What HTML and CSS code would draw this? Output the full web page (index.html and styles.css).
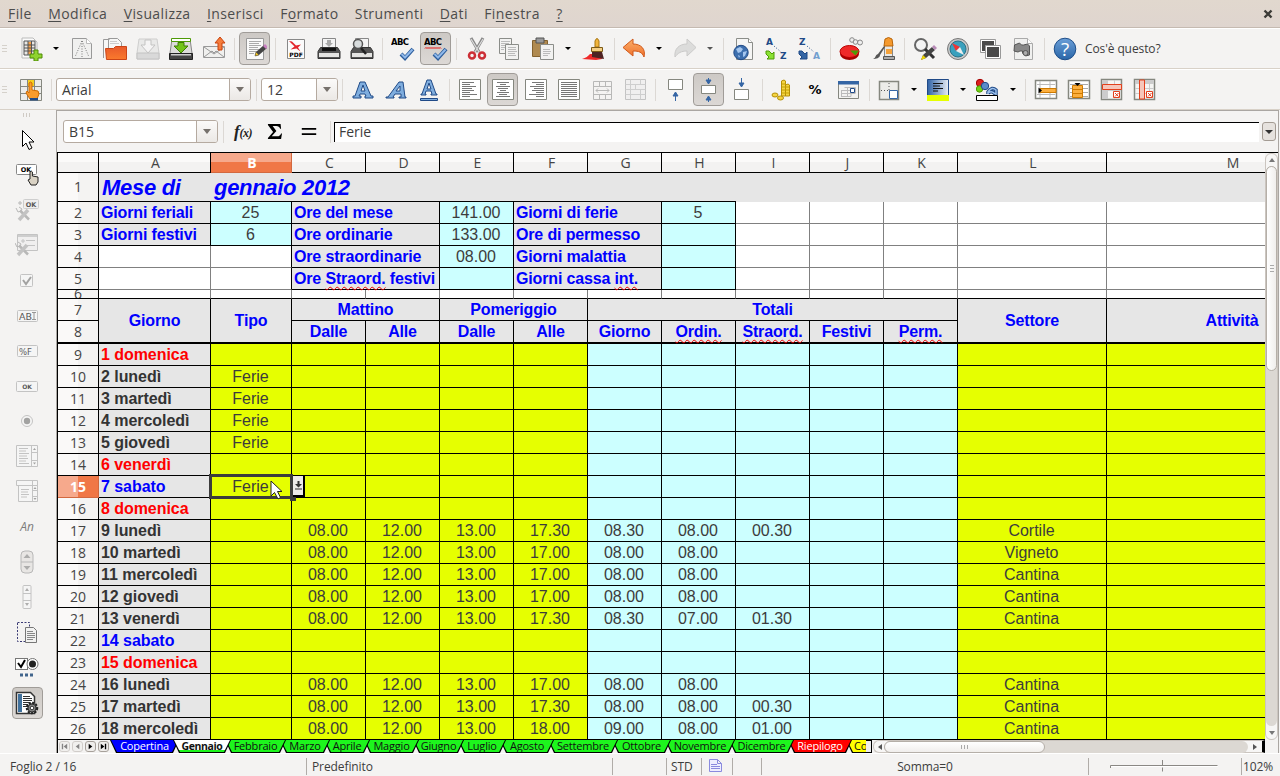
FILE: index.html
```html
<!DOCTYPE html>
<html lang="it">
<head>
    <meta charset="UTF-8">
    <meta name="viewport" content="width=device-width, initial-scale=1.0">
    <title>Foglio presenze</title>
    <link rel="stylesheet" href="styles.css">
</head>
<body>
    <nav class="menubar">
        <span><u>F</u>ile</span>
        <span><u>M</u>odifica</span>
        <span><u>V</u>isualizza</span>
        <span><u>I</u>nserisci</span>
        <span>F<u>o</u>rmato</span>
        <span>Strumenti</span>
        <span><u>D</u>ati</span>
        <span>Fi<u>n</u>estra</span>
        <span><u>?</u></span>
        <svg class="close" width="10" height="10" viewBox="0 0 10 10"><path d="M1.5 1.5l7 7M8.5 1.5l-7 7" stroke="#3c3b37" stroke-width="2.4"/></svg>
    </nav>

    <!-- standard toolbar -->
    <div class="toolbar standard">
        <i class="grip"></i>
        <div class="btn"><svg viewBox="0 0 24 24"><path d="M3 1h11l4 4v16H3z" fill="#fafafa" stroke="#bbb"/><path d="M5 4h11v14H5z" fill="#e8e8e6" stroke="#555"/><path d="M9 5h3v12H9z" fill="#f5a14b"/><path d="M5 8h11M5 11h11M5 14h11M9 4v14M12.500 4v14" stroke="#555" fill="none"/><path d="M15 13h4v4h4v4h-4v3h-4v-3h-4v-4h4z" fill="#8fd32e" stroke="#4e8a06"/></svg></div>
        <i class="arrow"></i>
        <div class="btn"><svg viewBox="0 0 24 24"><path d="M2.500 1.500h14l5 5v15h-19z" fill="#f0f0ef" stroke="#999"/><path d="M16.500 1.500v5h5" fill="#fff" stroke="#bbb"/><path d="M12 4L5 20M12 4l7 16M12 4v17" stroke="#777" stroke-dasharray="1 1.500" fill="none"/></svg></div>
        <div class="btn"><svg viewBox="0 0 24 24"><path d="M.500 21V2.500h6M5.500 1.500h9l4 4V15h-13z" fill="#f7f7f6" stroke="#999"/><path d="M7 4.500h7M7 6.500h9" stroke="#ccc"/><path d="M2.500 11.500h8l2-2h11v13h-20z" fill="url(#gOrange)" stroke="#cc4416"/></svg></div>
        <div class="btn dim"><svg viewBox="0 0 24 24"><path d="M3 2h18l2 14v6H1v-6z" fill="#e4e4e3" stroke="#bbb"/><path d="M1 16h22v6H1z" fill="#ccc" stroke="#aaa"/><path d="M9 3h6v5h4l-7 8-7-8h4z" fill="#f6f6f6" stroke="#aaa"/></svg></div>
        <div class="btn"><svg viewBox="0 0 24 24"><path d="M3 2h18l2 14v6H1v-6z" fill="#dcdcda" stroke="#888"/><path d="M.500 16.500h23v6H.500z" fill="#444" stroke="#222"/><path d="M2 17h20v1.500H2z" fill="#ccc"/><path d="M2.500 1.500h19v3h-19z" fill="#fff" stroke="#4e9a06"/><path d="M9 5.500h6V9h4l-7 7-7-7h4z" fill="#73c41a" stroke="#3f7d04"/></svg></div>
        <div class="btn"><svg viewBox="0 0 24 24"><path d="M1.500 9.500h21v11h-21z" fill="#f0f0ee" stroke="#999"/><path d="M2 20l8-6 2 2 2-2 8 6M2 10l10 7 10-7" stroke="#999" fill="none"/><path d="M18 0l5 6h-3v7h-4V6h-3z" fill="#f57c3c" stroke="#c9430d"/></svg></div>
        <i class="sep"></i>
        <div class="btn on"><svg viewBox="0 0 24 24"><path d="M3.500 1.500h17v21h-17z" fill="#fafafa" stroke="#999"/><path d="M6 4.500h12M6 6.500h10M6 8.500h12M6 10.500h9M6 12.500h11M6 14.500h8M6 16.500h5" stroke="#aaa"/><path d="M12 19l1-4 8-7 3 3-8 7z" fill="#444"/><path d="M20 9l2-2 3 3-2 2z" fill="#c77fc0"/><path d="M12 19l1-4 3 3z" fill="#f3c623" stroke="#444" stroke-width=".5"/></svg></div>
        <i class="sep"></i>
        <div class="btn"><svg viewBox="0 0 24 24"><path d="M3.500 2.500h17v19h-17z" fill="#fbfbfb" stroke="#888"/><path d="M5 4l3 .5 4 4 5-1-3 3 2.500 4-4-3-6 1 4-3z" fill="#e3242b"/><text x="12" y="20" font-size="6" font-weight="bold" text-anchor="middle" class="ico-text">PDF</text></svg></div>
        <div class="btn"><svg viewBox="0 0 24 24"><path d="M5.500 1.500h13v10h-13z" fill="#f4f4f4" stroke="#888"/><path d="M10 3h4v3h2l-4 4-4-4h2z" fill="#aaa"/><path d="M3.500 10.500h17l2.500 4v7H1v-7z" fill="#555" stroke="#333"/><path d="M2 16h20v4H2z" fill="#e4e4e2"/><path d="M5 11h14v3H5z" fill="#111"/></svg></div>
        <div class="btn"><svg viewBox="0 0 24 24"><path d="M5.500 1.500h13v10h-13z" fill="#f4f4f4" stroke="#888"/><path d="M3.500 10.500h17l2.500 4v7H1v-7z" fill="#555" stroke="#333"/><path d="M2 16h20v4H2z" fill="#e4e4e2"/><circle cx="8" cy="7" r="4.500" fill="#d8dcdd" stroke="#555" stroke-width="1.500"/><path d="M11 11l5 6" stroke="#222" stroke-width="2.500"/></svg></div>
        <i class="sep"></i>
        <div class="btn"><svg viewBox="0 0 24 24"><text x="9" y="8" font-size="8.500" font-weight="bold" text-anchor="middle" class="ico-text" textLength="18">ABC</text><path d="M10 17l4 4 8-9" fill="none" stroke="#2c5d9b" stroke-width="4"/><path d="M10.500 17l3.500 3.500 7.500-8" fill="none" stroke="#8fb8ea" stroke-width="2"/></svg></div>
        <div class="btn on"><svg viewBox="0 0 24 24"><text x="9" y="8" font-size="8.500" font-weight="bold" text-anchor="middle" class="ico-text" textLength="18">ABC</text><path d="M1 11.500l1-1 1 1 1-1 1 1 1-1 1 1 1-1 1 1 1-1 1 1 1-1 1 1 1-1 1 1 1-1 1 1" fill="none" stroke="#e00"/><path d="M10 17l4 4 8-9" fill="none" stroke="#2c5d9b" stroke-width="4"/><path d="M10.500 17l3.500 3.500 7.500-8" fill="none" stroke="#8fb8ea" stroke-width="2"/></svg></div>
        <i class="sep"></i>
        <div class="btn"><svg viewBox="0 0 24 24"><path d="M6 1l8 14M18 1l-8 14" stroke="#888" stroke-width="3"/><path d="M6 2l8 13M18 2l-8 13" stroke="#ddd" stroke-width="1.200"/><circle cx="7" cy="18.500" r="3" fill="none" stroke="#cc2f36" stroke-width="2.500"/><circle cx="17" cy="18.500" r="3" fill="none" stroke="#cc2f36" stroke-width="2.500"/></svg></div>
        <div class="btn"><svg viewBox="0 0 24 24"><path d="M1.500 1.500h12v15h-12z" fill="#f2f2f1" stroke="#8b8d89"/><path d="M3 4.500h9M3 6.500h8M3 8.500h4M3 10.500h4M3 12.500h3" stroke="#bbb"/><path d="M7.500 7.500h13v15h-13z" fill="#f2f2f1" stroke="#8b8d89"/><path d="M10 10.500h8M10 12.500h8M10 14.500h9M10 16.500h7M10 18.500h8" stroke="#bbb"/></svg></div>
        <div class="btn"><svg viewBox="0 0 24 24"><path d="M1.500 3.500h15v16h-15z" fill="#b08a50" stroke="#84622f"/><path d="M5 1h8v5H5z" fill="#999" stroke="#555"/><path d="M9.500 7.500h13v15h-13z" fill="#f2f2f1" stroke="#8b8d89"/><path d="M12 12.500h7M12 14.500h8M12 16.500h7M12 18.500h5" stroke="#bbb"/></svg></div>
        <i class="arrow"></i>
        <div class="btn"><svg viewBox="0 0 24 24"><path d="M0 22c4-1 6-3 8-5l11 0 1 5-6 1z" fill="#ef2929"/><path d="M13 10V4q2-5 4 0v6z" fill="#f0b43c" stroke="#a9740d"/><path d="M9.500 10.500h11v4h-11z" fill="#f4cf84" stroke="#7c5a17"/><path d="M10 15h10l2 7-12-2z" fill="#4e2323"/></svg></div>
        <i class="sep"></i>
        <div class="btn split"><svg viewBox="0 0 24 24"><path d="M1 10.500L11 2v5c8 0 13 5 11 13-2-5-5-6-11-6v5z" fill="url(#gUndo)" stroke="#d0591a"/></svg></div>
        <i class="arrow"></i>
        <div class="btn dim"><svg viewBox="0 0 24 24"><path d="M23 10.500L14 2v5C6 7 1 12 2 20c3-4 6-6 12-6v5z" fill="#d0d0cf" stroke="#b5b5b4"/></svg></div>
        <i class="arrow dim"></i>
        <i class="sep"></i>
        <div class="btn"><svg viewBox="0 0 24 24"><path d="M4.500 1.500h12l4 4v17h-16z" fill="#f5f5f4" stroke="#8b8d89"/><path d="M16.500 1.500v4h4" fill="#fff" stroke="#8b8d89"/><circle cx="9" cy="15.500" r="7.200" fill="#3d6fae" stroke="#204a87"/><path d="M4 12l4-2 3 2-2 3-3 1zM11 15l4-1-2 5-2 1zM6 18l2 1-1 2z" fill="#a5c6ee"/></svg></div>
        <div class="btn"><svg viewBox="0 0 24 24"><text x="1" y="8" font-size="9" font-weight="bold" class="ico-text blue">A</text><text x="15" y="22" font-size="9" font-weight="bold" class="ico-text blue">Z</text><path d="M9 9l7 6" stroke="#204a87" stroke-dasharray="1 2"/><path d="M1 14h3l3 3 2-2v7H2l2-2-3-3z" fill="#8ae234" stroke="#4e9a06"/></svg></div>
        <div class="btn"><svg viewBox="0 0 24 24"><text x="1" y="8" font-size="9" font-weight="bold" class="ico-text blue">Z</text><text x="15" y="22" font-size="9" font-weight="bold" class="ico-text lightblue">A</text><path d="M9 9l7 6" stroke="#204a87" stroke-dasharray="1 2"/><path d="M1 14h3l3 3 2-2v7H2l2-2-3-3z" fill="#3465a4" stroke="#204a87"/></svg></div>
        <i class="sep"></i>
        <div class="btn"><svg viewBox="0 0 24 24"><ellipse cx="10.500" cy="17" rx="9.500" ry="6" fill="#a40000"/><ellipse cx="10.500" cy="14.500" rx="9.500" ry="6" fill="#ef2929" stroke="#b00"/><path d="M11 13.500h9l-3.500 5z" fill="#4e9a06"/><g fill="#eee" stroke="#888"><circle cx="13" cy="3" r="2.300"/><circle cx="21" cy="5.500" r="2.500"/><circle cx="16.500" cy="5" r="2.300"/></g></svg></div>
        <div class="btn"><svg viewBox="0 0 24 24"><path d="M12.500 8h8v12h-8z" fill="#e8e8e6" stroke="#888"/><path d="M13 2q3.500-3 7 0l1 7h-9z" fill="#f59a2e" stroke="#b8650a"/><path d="M14 12h6v5h-6z" fill="#f5a33c"/><path d="M11.500 19.500h11v3h-11z" fill="#aaa" stroke="#555"/><path d="M1 22c3-1 2-4 5-5l6-8 1 1-5 8c0 3-4 4-7 4z" fill="#555"/></svg></div>
        <i class="sep"></i>
        <div class="btn"><svg viewBox="0 0 24 24"><circle cx="8" cy="8" r="6" fill="#f4f4f4" stroke="#666" stroke-width="2"/><path d="M12 12l9 9" stroke="#333" stroke-width="3"/><path d="M8 23l2-5 9-8 3 3-9 8z" fill="#444"/><path d="M19 10l2-2 3 3-2 2z" fill="#b98bb8"/><path d="M8 23l2-5 3 3z" fill="#edd400"/></svg></div>
        <div class="btn"><svg viewBox="0 0 24 24"><circle cx="12" cy="12" r="10.500" fill="#c9c9c9" stroke="#777"/><circle cx="12" cy="12" r="8" fill="#3aa0bd" stroke="#2b7288"/><path d="M6 6l8 4-4 4z" fill="#e33"/><path d="M18 18l-8-4 4-4z" fill="#eee"/></svg></div>
        <div class="btn"><svg viewBox="0 0 24 24"><path d="M1.500 2.500h15v13h-15z" fill="#fff" stroke="#999"/><path d="M3 4h12v10H3z" fill="#4a4a4a"/><path d="M6.500 8.500h15v13h-15z" fill="#fff" stroke="#999"/><path d="M8 10h12v10H8z" fill="#4a4a4a"/></svg></div>
        <div class="btn"><svg viewBox="0 0 24 24"><path d="M2.500 1.500h13l5 5v16h-18z" fill="#f0f0ef" stroke="#aaa"/><path d="M15.500 1.500v5h5" fill="#fff" stroke="#aaa"/><path d="M2.500 8l5-2 2 2h2l4-1 2 2v9l-4 1-3-3v-2H8l-2 1-4-1z" fill="#888" stroke="#555"/><circle cx="13.500" cy="16" r="2.500" fill="#aaa" stroke="#555"/></svg></div>
        <i class="sep"></i>
        <div class="btn"><svg viewBox="0 0 24 24"><circle cx="12" cy="12" r="10.800" fill="url(#gHelp)" stroke="#1f4f8a"/><text x="12" y="18.500" font-size="19" text-anchor="middle" fill="#fff" font-family="Open Sans, sans-serif">?</text></svg></div>
        <span class="whats">Cos'è questo?</span>
    </div>

    <!-- formatting toolbar -->
    <div class="toolbar">
        <i class="grip"></i>
        <div class="btn"><svg viewBox="0 0 24 24"><path d="M1.500 1.500h21v21h-21z" fill="#ecece9" stroke="#85877f"/><path d="M1 8.500h22M1 15.500h22M8.500 1v22M15.500 1v22" stroke="#85877f"/><path d="M9 2h6v6H9z" fill="#f5d020"/><path d="M10 5q1.500-2 3 0v7l6 1 1 3-2 5h-7l-4-6 1-2 2 2z" fill="#f99b2d" stroke="#ce6a00"/><path d="M11 20h8v2.500h-8z" fill="#204a87"/></svg></div>
        <i class="sep"></i>
        <div class="combo font"><span>Arial</span><b></b></div>
        <i class="sep"></i>
        <div class="combo size"><span>12</span><b></b></div>
        <i class="sep narrow"></i>
        <div class="btn"><svg viewBox="0 0 24 24"><path fill-rule="evenodd" d="M2 20v-2h2L9 4h5l6 14h2v2h-8v-2h1l-1-2H9l-1 2h2v2zM10 13h4l-2-6z" fill="#7fadde" stroke="#204a87"/></svg></div>
        <div class="btn"><svg viewBox="0 0 24 24"><path fill-rule="evenodd" d="M2 20v-1h2L15 4h4l2 15h1v1h-7v-1h2v-3h-6l-2 3h1v1zM12 13h4l0-5z" fill="#7fadde" stroke="#204a87"/></svg></div>
        <div class="btn"><svg viewBox="0 0 24 24"><path fill-rule="evenodd" d="M4 17v-1h1l5-14h4l5 14h1v1h-6v-1h1l-1-3H9l-1 3h1v1zM10 11h4l-2-6z" fill="#7fadde" stroke="#204a87"/><path d="M3.500 20.500h17v2h-17z" fill="#7fadde" stroke="#204a87"/></svg></div>
        <i class="sep"></i>
        <div class="btn"><svg viewBox="0 0 24 24"><path d="M1.500 1.500h21v20h-21z" fill="#fff" stroke="#85877f"/><path d="M4 4.500h12M4 6.500h8M4 8.500h14M4 10.500h10M4 12.500h12M4 14.500h8M4 16.500h15M4 18.500h8" stroke="#777"/></svg></div>
        <div class="btn on"><svg viewBox="0 0 24 24"><path d="M1.500 1.500h21v20h-21z" fill="#fff" stroke="#85877f"/><path d="M6 4.500h12M9 6.500h6M5 8.500h14M7 10.500h10M9 12.500h6M6 14.500h12M8 16.500h8M5 18.500h14" stroke="#777"/></svg></div>
        <div class="btn"><svg viewBox="0 0 24 24"><path d="M1.500 1.500h21v20h-21z" fill="#fff" stroke="#85877f"/><path d="M8 4.500h12M12 6.500h8M6 8.500h14M10 10.500h10M8 12.500h12M12 14.500h8M5 16.500h15M12 18.500h8" stroke="#777"/></svg></div>
        <div class="btn"><svg viewBox="0 0 24 24"><path d="M1.500 1.500h21v20h-21z" fill="#fff" stroke="#85877f"/><path d="M4 4.500h16M4 6.500h16M4 8.500h16M4 10.500h16M4 12.500h16M4 14.500h16M4 16.500h16M4 18.500h16" stroke="#777"/></svg></div>
        <div class="btn dim"><svg viewBox="0 0 24 24"><path d="M3.500 3.500h18v18h-18zM3.500 8.500h18M3.500 16.500h18M9.500 3.500v5M15.500 3.500v5M9.500 16.500v5M15.500 16.500v5M6 12.500h13M8 10.500l-2 2 2 2M17 10.500l2 2-2 2" fill="none" stroke="#999"/></svg></div>
        <div class="btn dim"><svg viewBox="0 0 24 24"><path d="M2.500 1.500h20v20h-20z" fill="#eee" stroke="#aaa"/><path d="M2.500 6.500h20M2.500 11.500h20M2.500 16.500h20M7.500 1.500v20M12.500 6.500v5M17.500 1.500v5M17.500 11.500v10" stroke="#bbb" fill="none"/></svg></div>
        <i class="sep"></i>
        <div class="btn"><svg viewBox="0 0 24 24"><path d="M4.500 1.500h14v10h-14z" fill="#fff" stroke="#85877f"/><path d="M11.500 23v-5M9 18l2.500-4 2.500 4z" stroke="#3465a4" fill="#3465a4"/></svg></div>
        <div class="btn on"><svg viewBox="0 0 24 24"><path d="M4.500 7.500h14v8h-14z" fill="#fff" stroke="#85877f"/><path d="M9 2l2.500 4L14 2zM9 22l2.500-4 2.500 4zM11.500 0v3M11.500 21v3" stroke="#3465a4" fill="#3465a4"/></svg></div>
        <div class="btn"><svg viewBox="0 0 24 24"><path d="M4.500 11.500h14v10h-14z" fill="#fff" stroke="#85877f"/><path d="M11.500 0v5M9 5l2.500 4L14 5z" stroke="#3465a4" fill="#3465a4"/></svg></div>
        <i class="sep"></i>
        <div class="btn"><svg viewBox="0 0 24 24"><path d="M10.500 3q3-2 4 0v15h-4zM14.500 7q3-2 4 0v11h-4z" fill="#f4d442" stroke="#b58f06"/><path d="M11 6h4M11 9h7M11 12h7M11 15h7" stroke="#c4a000"/><ellipse cx="4" cy="17" rx="3" ry="2" fill="#f4d442" stroke="#b58f06"/><ellipse cx="9.500" cy="20" rx="3" ry="2" fill="#f4d442" stroke="#b58f06"/></svg></div>
        <div class="btn"><svg viewBox="0 0 24 24"><text x="11" y="16" font-size="13" font-weight="bold" text-anchor="middle" class="ico-text">%</text></svg></div>
        <div class="btn"><svg viewBox="0 0 24 24"><path d="M1.500 3.500h20v17h-20z" fill="#f3f3f1" stroke="#85877f"/><path d="M1 3h21v3.500H1z" fill="#3465a4"/><path d="M7.500 9.500h11v6M4 12.500h14M4 15.500h14M4 18.500h10M4.500 12v6M10.500 9.500v9M14 9.500v9" fill="none" stroke="#bbb"/><path d="M13.500 10.500h4v4h-4z" fill="#fff" stroke="#204a87"/></svg></div>
        <i class="sep"></i>
        <div class="btn split"><svg viewBox="0 0 24 24"><path d="M2.500 3.500h19v18h-19z" fill="#ecece9" stroke="#85877f" stroke-width="1.500"/><path d="M12 5v8M4 12.500h9" stroke="#555" stroke-dasharray="1 2"/><path d="M12.500 12.500h8v8h-8z" fill="#fff" stroke="#3465a4"/></svg></div>
        <i class="arrow"></i>
        <div class="btn split"><svg viewBox="0 0 24 24"><path d="M.500 1.500h21v16h-21z" fill="url(#gBack)" stroke="#204a87"/><path d="M6 5.500h10M6 8h7M6 10.500h10M6 13h5" stroke="#111"/><path d="M0 17h22v6H0z" fill="#e6ff00"/></svg></div>
        <i class="arrow"></i>
        <div class="btn split"><svg viewBox="0 0 24 24"><circle cx="4" cy="5" r="3.700" fill="#dc1f1f" stroke="#a40000"/><circle cx="3.500" cy="11" r="3.200" fill="#73d216" stroke="#4e9a06"/><circle cx="9" cy="8" r="3.700" fill="#5a8bc9" stroke="#204a87"/><path d="M12 16v-2q4-6 8-2v5M12 15q4-3 7 1" fill="none" stroke="#204a87" stroke-width="3.500"/><path d="M12 16v-2q4-6 8-2v5M12 15q4-3 7 1" fill="none" stroke="#9cc1ec" stroke-width="1.500"/><path d="M.500 17.500h21v5h-21z" fill="#fff" stroke="#000"/></svg></div>
        <i class="arrow"></i>
        <i class="sep"></i>
        <div class="btn"><svg viewBox="0 0 24 24"><path d="M1.500 2.500h21v18h-21z" fill="#fff" stroke="#85877f" stroke-width="1.500"/><path d="M3 6.500h18M3 16.500h18M6 3v17M16 3v17" stroke="#bbb"/><path d="M6 10.500h16v4H6z" fill="#fcaf3e" stroke="#ce7a00"/><path d="M4.500 9.500l3.500 3-3.500 3z"/></svg></div>
        <div class="btn"><svg viewBox="0 0 24 24"><path d="M1.500 2.500h21v18h-21z" fill="#fff" stroke="#85877f" stroke-width="1.500"/><path d="M3 6.500h18M3 10.500h18M3 14.500h18M3 18.500h18" stroke="#aaa"/><path d="M5.500 7.500h10v12h-10zM5.500 11.500h10M5.500 15.500h10" fill="#fcaf3e" stroke="#ce7a00"/><path d="M7.500 5h6l-3 3z"/></svg></div>
        <div class="btn"><svg viewBox="0 0 24 24"><path d="M1.500 1.500h20v20h-20z" fill="#f5f5f3" stroke="#85877f" stroke-width="1.500"/><path d="M2 2h5v19H2z" fill="#ccc"/><path d="M7.500 2v19M14.500 2v19M2 12.500h19" stroke="#ccc"/><path d="M2.500 6.500h19v5h-19z" fill="#f6c6ba" stroke="#e3401c"/><path d="M13.500 13.500h6v6h-6z" fill="#fff" stroke="#e3401c"/><path d="M15 15l3.500 3.500M18.500 15L15 18.500" stroke="#e3401c"/></svg></div>
        <div class="btn"><svg viewBox="0 0 24 24"><path d="M1.500 1.500h20v20h-20z" fill="#f5f5f3" stroke="#85877f" stroke-width="1.500"/><path d="M2 2h19v4H2z" fill="#ccc"/><path d="M2 10.500h19M2 15.500h19M16.500 2v19" stroke="#ccc"/><path d="M6.500 2v19h5V2z" fill="#f6c6ba" stroke="#e3401c"/><path d="M13.500 13.500h6v6h-6z" fill="#fff" stroke="#e3401c"/><path d="M15 15l3.500 3.500M18.500 15L15 18.500" stroke="#e3401c"/></svg></div>
    </div>

    <div class="main">
        <!-- form controls toolbar -->
        <aside class="sidebar">
            <i class="grip-h"></i>
            <div class="tool"><svg viewBox="0 0 24 24"><path d="M7.500 2.500v16l3.500-3.500 3 6.500 3-1.500-3-6h5z" fill="#fff" stroke="#000"/></svg></div>
            <div class="tool"><svg viewBox="0 0 24 24"><rect x="1.500" y="1.500" width="20" height="10" rx="1" fill="#fff" stroke="#888"/><text x="11" y="9" font-size="6.500" font-weight="bold" text-anchor="middle" class="ico-text">OK</text><path d="M15 9q1.200-2 2.400 0v4l5.600 1v5l-2 3h-5l-3-5 2-1z" fill="#d9d2c4" stroke="#222"/></svg></div>
            <div class="tool dim"><svg viewBox="0 0 24 24"><rect x="8.500" y="1.500" width="15" height="9" rx="1" fill="#eee" stroke="#bbb"/><text x="16" y="8.500" font-size="6.500" font-weight="bold" text-anchor="middle" class="ico-text">OK</text><path d="M5 12.500l9 9" stroke="#999" stroke-width="2.500"/><path d="M13 12L4 22" stroke="#aaa" stroke-width="3.500"/><path d="M1 10l2 4 3-1 1-2-3-2M3 5h4M5 3v4" stroke="#999" fill="none"/></svg></div>
            <div class="tool dim"><svg viewBox="0 0 24 24"><path d="M2.500 1.500h20v16h-20z" fill="#eee" stroke="#aaa"/><path d="M3 2h19v2H3z" fill="#bbb"/><path d="M7 7h2v2H7zM11 7.500h9M11 12.500h9" stroke="#aaa" fill="none"/><path d="M4 12.500l9 9" stroke="#999" stroke-width="2.500"/><path d="M12 12L3 22" stroke="#aaa" stroke-width="3.500"/><path d="M0 10l2 4 3-1 1-2-3-2" stroke="#999" fill="none"/></svg></div>
            <div class="tool dim"><svg viewBox="0 0 24 24"><rect x="5.500" y="6.500" width="12" height="12" rx="1" fill="#f7f7f7" stroke="#aaa"/><path d="M8 12l3 4 5-7" fill="none" stroke="#777" stroke-width="2"/></svg></div>
            <div class="tool dim"><svg viewBox="0 0 24 24"><rect x="2.500" y="6.500" width="20" height="11" rx="1" fill="#f7f7f7" stroke="#aaa"/><text x="10.500" y="15.500" font-size="9.500" text-anchor="middle" class="ico-text">AB</text><path d="M17 8.500h4M17 15.500h4M19 8.500v7" stroke="#666"/></svg></div>
            <div class="tool dim"><svg viewBox="0 0 24 24"><rect x="2.500" y="6.500" width="20" height="11" rx="1" fill="#f7f7f7" stroke="#aaa"/><text x="10.500" y="15.500" font-size="8.500" text-anchor="middle" class="ico-text">%F</text></svg></div>
            <div class="tool dim"><svg viewBox="0 0 24 24"><rect x="1.500" y="7.500" width="21" height="10" rx="1" fill="#f7f7f7" stroke="#aaa"/><text x="12" y="15" font-size="6" font-weight="bold" text-anchor="middle" class="ico-text">OK</text></svg></div>
            <div class="tool dim"><svg viewBox="0 0 24 24"><circle cx="12" cy="12" r="5.500" fill="#f7f7f7" stroke="#aaa"/><circle cx="12" cy="12" r="3.200" fill="#777"/></svg></div>
            <div class="tool dim"><svg viewBox="0 0 24 24"><path d="M1.500 1.500h21v21h-21z" fill="#f7f7f7" stroke="#aaa"/><path d="M4 4.500h9M4 7h7M4 9.500h10M4 12h8M4 14.500h9M4 17h7M4 19.500h10M16.500 1.500v21M17 8.500h5M17 16.500h5" stroke="#aaa"/><path d="M18 6l1.500-2 1.500 2zM18 18.500l1.500 2 1.500-2z" fill="#777"/></svg></div>
            <div class="tool dim"><svg viewBox="0 0 24 24"><path d="M1.500 1.500h21v5h-21zM3.500 6.500h19v16h-19z" fill="#f7f7f7" stroke="#aaa"/><path d="M6 10.500h8M6 13h7M6 15.500h8M6 18h6M17.500 1.500v21M18 11.500h4M18 17.500h4" stroke="#aaa"/><path d="M18.500 10l1.500-2 1.500 2zM18.500 19l1.500 2 1.500-2z" fill="#777"/></svg></div>
            <div class="tool dim an">An</div>
            <div class="tool dim"><svg viewBox="0 0 24 24"><rect x="6" y="1" width="12" height="22" rx="4" fill="#e2e0de" stroke="#999"/><path d="M6 12h12" stroke="#999"/><path d="M8.500 8l3.500-4 3.500 4zM8.500 16l3.500 4 3.500-4z" fill="#888"/></svg></div>
            <div class="tool dim"><svg viewBox="0 0 24 24"><rect x="8" y="0.500" width="8" height="23" rx="1" fill="#f7f7f7" stroke="#aaa"/><path d="M8 8.500h8M8 15.500h8" stroke="#aaa"/><path d="M10 6l2-3 2 3zM10 18l2 3 2-3z" fill="#888"/></svg></div>
            <div class="tool"><svg viewBox="0 0 24 24"><path d="M2.500 2.500h12v19h-12z" fill="none" stroke="#3a3a75" stroke-dasharray="2 1.500"/><path d="M10.500 7.500h8l3 3v12h-11z" fill="#f2f2f1" stroke="#777"/><path d="M12 11.500h6M12 13.500h8M12 15.500h8M12 17.500h8M12 19.500h6" stroke="#888"/></svg></div>
            <div class="tool"><svg viewBox="0 0 24 24"><rect x=".500" y="3.500" width="12" height="11" fill="#fff" stroke="#777"/><path d="M3 8l3 4 4-7" fill="none" stroke="#000" stroke-width="2"/><circle cx="17.500" cy="9" r="5.500" fill="#fff" stroke="#777"/><circle cx="17.500" cy="9" r="3.500" fill="#222"/><path d="M5 18.500h3v3H5zM10 18.500h3v3h-3zM15 18.500h3v3h-3z" fill="#41658c"/></svg></div>
            <div class="tool on"><svg viewBox="0 0 24 24"><path d="M1.500 1.500h14l4 4v17h-18z" fill="#fff" stroke="#333" stroke-width="1.500"/><path d="M3 3h4v18H3z" fill="#41719c"/><path d="M8 5.500h7M8 7.500h9M8 9.500h9M8 11.500h7M8 13.500h5M8 15.500h4" stroke="#333"/><circle cx="17" cy="17" r="5" fill="#888" stroke="#222" stroke-width="2.500" stroke-dasharray="2 1.300"/><circle cx="17" cy="17" r="4" fill="#888" stroke="#333"/><circle cx="17" cy="17" r="1.800" fill="#fff" stroke="#333"/></svg></div>
        </aside>

        <section class="work">
            <div class="formula-bar">
                <div class="combo name"><span>B15</span><b></b></div>
                <i class="sep"></i>
                <span class="fx">f<small>(x)</small></span>
                <svg class="sigma" viewBox="0 0 16 18"><path d="M1 1h13.500l.5 5h-1q-1-3-4-3H6l4 5.500L5 14h6q3 0 4-3h1l-1 6H1v-1l5.500-6.500L1 2z"/></svg>
                <svg class="equals" viewBox="0 0 16 10"><path d="M0 1h16v2H0zM0 7h16v2H0z"/></svg>
                <i class="sep"></i>
                <div class="input-line">Ferie</div>
                <div class="expand"><i></i></div>
            </div>

            <div class="sheet-area">
                <div class="sheet-clip">
                    <div class="sheet" id="sheet">
                        <div class="col-head corner"></div>
                        <div class="col-head">A</div>
                        <div class="col-head active">B</div>
                        <div class="col-head">C</div>
                        <div class="col-head">D</div>
                        <div class="col-head">E</div>
                        <div class="col-head">F</div>
                        <div class="col-head">G</div>
                        <div class="col-head">H</div>
                        <div class="col-head">I</div>
                        <div class="col-head">J</div>
                        <div class="col-head">K</div>
                        <div class="col-head">L</div>
                        <div class="col-head">M</div>

                        <div class="row-head">1</div>
                        <div class="title">Mese di</div>
                        <div class="title month">gennaio 2012</div>

                        <div class="row-head">2</div>
                        <div class="label">Giorni feriali</div><div class="cell total">25</div>
                        <div class="label two">Ore del mese</div><div class="cell total">141.00</div>
                        <div class="label two">Giorni di ferie</div><div class="cell total">5</div>
                        <div class="blank"></div><div class="blank"></div><div class="blank"></div><div class="blank"></div><div class="blank"></div>

                        <div class="row-head">3</div>
                        <div class="label">Giorni festivi</div><div class="cell total">6</div>
                        <div class="label two">Ore ordinarie</div><div class="cell total">133.00</div>
                        <div class="label two">Ore di permesso</div><div class="cell total"></div>
                        <div class="blank"></div><div class="blank"></div><div class="blank"></div><div class="blank"></div><div class="blank"></div>

                        <div class="row-head">4</div>
                        <div class="blank"></div><div class="blank edge"></div>
                        <div class="label two">Ore straordinarie</div><div class="cell total">08.00</div>
                        <div class="label two">Giorni malattia</div><div class="cell total"></div>
                        <div class="blank"></div><div class="blank"></div><div class="blank"></div><div class="blank"></div><div class="blank"></div>

                        <div class="row-head">5</div>
                        <div class="blank"></div><div class="blank edge"></div>
                        <div class="label two">Ore <span class="typo">Straord.</span> festivi</div><div class="cell total"></div>
                        <div class="label two">Giorni cassa <span class="typo">int.</span></div><div class="cell total"></div>
                        <div class="blank"></div><div class="blank"></div><div class="blank"></div><div class="blank"></div><div class="blank"></div>

                        <div class="row-head thin"><span>6</span></div>
                        <div class="blank last"></div><div class="blank last"></div><div class="blank last"></div><div class="blank last"></div><div class="blank last"></div><div class="blank last"></div><div class="blank last"></div><div class="blank last"></div><div class="blank last"></div><div class="blank last"></div><div class="blank last"></div><div class="blank last"></div><div class="blank last"></div>

                        <div class="row-head">7</div>
                        <div class="head tall">Giorno</div>
                        <div class="head tall">Tipo</div>
                        <div class="head two">Mattino</div>
                        <div class="head two">Pomeriggio</div>
                        <div class="head five">Totali</div>
                        <div class="head tall">Settore</div>
                        <div class="head tall">Attività</div>

                        <div class="row-head thick">8</div>
                        <div class="head thick">Dalle</div>
                        <div class="head thick">Alle</div>
                        <div class="head thick">Dalle</div>
                        <div class="head thick">Alle</div>
                        <div class="head thick">Giorno</div>
                        <div class="head thick"><span class="typo">Ordin.</span></div>
                        <div class="head thick"><span class="typo">Straord.</span></div>
                        <div class="head thick">Festivi</div>
                        <div class="head thick"><span class="typo">Perm.</span></div>
                    </div>
                </div>
                <div class="vscroll">
                    <i class="tri up"></i>
                    <div class="vtrack"><div class="vthumb"><i></i><i></i><i></i></div></div>
                    <i class="tri down"></i>
                </div>
            </div>

            <div class="tab-row">
                <div class="nav off"><svg viewBox="0 0 10 10"><path d="M2 2h1.500v6H2zM8 2v6L4 5z"/></svg></div>
                <div class="nav off"><svg viewBox="0 0 10 10"><path d="M7 2v6L3 5z"/></svg></div>
                <div class="nav"><svg viewBox="0 0 10 10"><path d="M3 2v6l4-3z"/></svg></div>
                <div class="nav"><svg viewBox="0 0 10 10"><path d="M2 2v6l4-3zM6.500 2H8v6H6.500z"/></svg></div>
                <div class="tabs" id="tabs"></div>
                <div class="tab-grip"></div>
                <div class="hscroll">
                    <i class="tri left"></i>
                    <div class="htrack"><div class="hthumb"><i></i><i></i><i></i></div></div>
                    <i class="tri right"></i>
                </div>
            </div>
        </section>
    </div>

    <footer class="statusbar">
        <span class="st sheet-no">Foglio 2 / 16</span>
        <span class="st style">Predefinito</span>
        <span class="st gap"></span>
        <span class="st mode">STD</span>
        <span class="st doc"><svg width="15" height="15" viewBox="0 0 15 15"><path d="M1.500 1.500h8l4 4v8h-12zM9.500 1.500v4h4M3 6.500h6M3 8.500h9M3 10.500h9" fill="#eef" stroke="#8a8ade"/></svg></span>
        <span class="st sign"></span>
        <span class="st sum">Somma=0</span>
        <span class="st zoom"><svg width="108" height="14" viewBox="0 0 108 14"><path d="M.500 9V6.500h107M52.500 1v5M52.500 8.500v4" fill="none" stroke="#8a8884"/><path d="M1 7.500h107" stroke="#fff"/></svg></span>
        <span class="st pct">102%</span>
    </footer>

    <svg width="0" height="0" class="defs">
        <defs>
            <linearGradient id="gOrange" x2="0" y2="1"><stop offset="0" stop-color="#e85a2b"/><stop offset="1" stop-color="#fa7a2d"/></linearGradient>
            <linearGradient id="gUndo" x2="0" y2="1"><stop offset="0" stop-color="#fbb06b"/><stop offset="1" stop-color="#f0702c"/></linearGradient>
            <linearGradient id="gHelp" x2="0" y2="1"><stop offset="0" stop-color="#6b9fd8"/><stop offset="1" stop-color="#2a66a8"/></linearGradient>
            <linearGradient id="gBack" x2="1"><stop offset="0" stop-color="#2f62a6"/><stop offset="1" stop-color="#e9eef5"/></linearGradient>
        </defs>
    </svg>
    <script src="script.js"></script>
</body>
</html>
```

FILE: styles.css
```css
* {
    margin: 0;
    padding: 0;
    box-sizing: border-box;
}
body {
    width: 1280px;
    height: 776px;
    overflow: hidden;
    display: flex;
    flex-direction: column;
    background: #f4f3f2;
    color: #3c3c3c;
    font-family: "Open Sans", "Noto Sans", sans-serif;
    font-size: 14px;
}
.defs {
    position: absolute;
}

/* menu */
.menubar {
    height: 28px;
    display: flex;
    align-items: center;
    gap: 16.4px;
    padding: 0 7px 0 8px;
    background: linear-gradient(#e1d8ce, #dfd5cf);
    border-bottom: 1px solid #c5bab1;
    color: #4c4c4c;
    letter-spacing: 0.4px;
}
.menubar u {
    text-underline-offset: 2px;
}
.close {
    margin-left: auto;
}

/* toolbars */
.toolbar {
    height: 41px;
    display: flex;
    align-items: center;
    padding-left: 2px;
    border-top: 1px solid #fff;
    border-bottom: 1px solid #d8d1c8;
}
.grip {
    width: 5px;
    height: 8px;
    margin-right: 7px;
    background: repeating-linear-gradient(#d5d1cb 0 1px, transparent 1px 3px);
}
.btn {
    width: 33px;
    height: 33px;
    flex: none;
    display: flex;
    align-items: center;
    justify-content: center;
}
.split {
    width: 32px;
}
.btn svg,
.tool svg {
    width: 24px;
    height: 24px;
}
.on {
    border: 1px solid #a09c98;
    border-radius: 4px;
    background: linear-gradient(#cdc9c5, #dcd8d5);
}
.btn.on {
    width: 31px;
    margin: 0 1px;
}
.dim {
    opacity: 0.65;
}
.ico-text {
    font-family: "DejaVu Sans", sans-serif;
    fill: #000;
}
.blue {
    fill: #204a87;
}
.lightblue {
    fill: #729fcf;
}
.arrow {
    width: 17.5px;
    flex: none;
}
.standard .arrow {
    width: 18px;
}
.arrow::before {
    content: "";
    display: block;
    margin: 0 auto;
    width: 0;
    border: 3px solid transparent;
    border-top-color: #000;
    border-bottom: 0;
}
.sep {
    width: 8px;
    height: 22px;
    flex: none;
    background: linear-gradient(#dcd8d4, #dcd8d4) center / 1px 100% no-repeat;
}
.narrow {
    width: 7px;
}
.whats {
    padding-left: 4px;
    font-size: 12px;
    letter-spacing: -0.1px;
}
.combo {
    height: 23px;
    display: flex;
    border: 1px solid #b5aaa0;
    border-radius: 3px;
    background: #fff;
    overflow: hidden;
}
.combo span {
    flex: 1;
    padding-left: 5px;
    line-height: 21px;
}
.combo b {
    width: 21px;
    display: flex;
    align-items: center;
    justify-content: center;
    border-left: 1px solid #b5aaa0;
    background: linear-gradient(#fbfaf9, #ebe8e5);
}
.combo b::before {
    content: "";
    border: 4px solid transparent;
    border-top: 5px solid #76716c;
    border-bottom: 0;
}
.font {
    width: 195px;
    margin: 0 1px;
}
.size {
    width: 77px;
    margin: 0 1px;
}
.name {
    width: 155px;
    margin: 0 1px 0 6px;
}

.main {
    flex: 1;
    min-height: 0;
    display: flex;
}

/* left toolbar */
.sidebar {
    width: 56px;
    display: flex;
    flex-direction: column;
    align-items: center;
    padding-right: 2px;
}
.grip-h {
    width: 8px;
    height: 4px;
    margin: 3px 0 5px;
    background: repeating-linear-gradient(90deg, #cfcac4 0 1px, transparent 1px 3px);
}
.tool {
    width: 31px;
    height: 35.2px;
    flex: none;
    display: flex;
    align-items: center;
    justify-content: center;
}
.tool.on {
    height: 32px;
    margin-top: 2px;
}
.an {
    font-size: 12px;
    font-style: italic;
}

/* work area */
.work {
    flex: 1;
    min-width: 0;
    display: flex;
    flex-direction: column;
    margin-right: 1px;
    border: 1px solid #aaa6a2;
    border-bottom: 0;
}
.formula-bar {
    height: 41px;
    display: flex;
    align-items: center;
}
.fx {
    width: 32px;
    text-align: center;
    color: #222;
    font: italic bold 17px "Liberation Serif", serif;
}
.fx small {
    font-size: 12px;
    letter-spacing: -0.5px;
}
.sigma {
    width: 15px;
    height: 17px;
    margin-left: 8px;
}
.equals {
    width: 16px;
    height: 9px;
    margin: 0 9px 0 19px;
}
.input-line {
    flex: 1;
    height: 20px;
    margin-right: 3px;
    padding-left: 4px;
    border-top: 1px solid #000;
    border-left: 1px solid #000;
    background: #fff;
    line-height: 18px;
}
.expand {
    width: 14px;
    height: 19px;
    margin-right: 2px;
    display: flex;
    align-items: center;
    justify-content: center;
    border: 1px solid #a39b93;
    border-radius: 3px;
    background: #e6e2de;
}
.expand i {
    border: 4px solid transparent;
    border-top-color: #333;
    border-bottom: 0;
}

/* spreadsheet */
.sheet-area {
    height: 588px;
    display: flex;
    border-top: 1px solid #000;
    border-left: 1px solid #000;
}
.sheet-clip {
    width: 1208px;
    overflow: hidden;
}
.sheet {
    width: 1300px;
    display: grid;
    grid-template-columns: 41px 112px 81px repeat(9, 74px) 149px 251px;
    grid-template-rows: 20px 29px repeat(4, 22px) 9px 22px 23px;
    grid-auto-rows: 22px;
    font: 16px/21px "Liberation Sans", Arial, sans-serif;
    background: #fff;
}
.sheet > div {
    border-right: 1px solid #000;
    border-bottom: 1px solid #000;
    text-align: center;
    white-space: nowrap;
}
.sheet > .cell {
    padding-right: 1px;
}
.col-head,
.row-head {
    font: 14px/20px "Open Sans", "Noto Sans", sans-serif;
    color: #444;
}
.col-head {
    padding-left: 2px;
    background: linear-gradient(#fbfaf9 50%, #f3f2f1 50%);
}
.row-head {
    display: flex;
    align-items: center;
    justify-content: center;
    background: linear-gradient(90deg, #faf9f8 50%, #f4f3f2 50%);
}
.thin {
    overflow: hidden;
    line-height: 8px;
}
.sheet > .active {
    border-color: #d2683f;
    background: linear-gradient(#f6a98c 50%, #f07746 50%);
    color: #fff;
    font-weight: bold;
}
.sheet > .row-head.active {
    background: linear-gradient(90deg, #f6a98c 50%, #f07746 50%);
}
.sheet > .title {
    padding-left: 3px;
    border: 0;
    background: #e6e6e6;
    border-bottom: 1px solid #000;
    color: #00f;
    font-size: 22px;
    font-weight: bold;
    font-style: italic;
    line-height: 29px;
    letter-spacing: -0.3px;
    text-align: left;
}
.sheet > .month {
    grid-column: span 12;
    border-bottom: 0;
    background: linear-gradient(#000, #000) 0 100% / 525px 1px no-repeat #e6e6e6;
}
.label,
.head,
.day {
    background: #e6e6e6;
    color: #00f;
    font-weight: bold;
    letter-spacing: -0.15px;
}
.day {
    letter-spacing: -0.05px;
}
.sheet > .label,
.sheet > .day {
    padding-left: 2px;
    text-align: left;
}
.two {
    grid-column: span 2;
}
.five {
    grid-column: span 5;
}
.sheet > .tall {
    grid-row: span 2;
    border-bottom-width: 2px;
    line-height: 44px;
}
.sheet > .thick {
    border-bottom-width: 2px;
}
.sheet > .blank {
    border-color: #808080;
}
.sheet > .edge {
    border-right-color: #000;
}
.sheet > .last {
    border-bottom-color: #000;
}
.typo {
    text-decoration: underline wavy #e00 1px;
    text-decoration-skip-ink: none;
    text-underline-offset: 2px;
}
.total {
    background: #cff;
}
.work-cell {
    background: #e6ff00;
}
.weekday {
    color: #333;
}
.saturday {
    color: #00f;
}
.holiday {
    color: #f00;
}

/* active cell */
.selected {
    position: relative;
}
.selected::before {
    content: "";
    position: absolute;
    inset: -2px -2px -2px -2px;
    border: 3px solid #3c3c3c;
}
.selected::after {
    content: "";
    position: absolute;
    right: -5px;
    bottom: -4px;
    width: 6px;
    height: 6px;
    background: #3c3c3c;
}
.picker {
    position: absolute;
    left: 82px;
    top: 0;
    z-index: 1;
    width: 12px;
    height: 21px;
    display: flex;
    align-items: center;
    justify-content: center;
    background: #eceae8;
    border-right: 2px solid #000;
    border-bottom: 2px solid #000;
}
.pointer {
    position: absolute;
    left: 57px;
    top: 3px;
    z-index: 2;
    width: 16px;
    height: 22px;
}

/* scrollbars */
.vscroll {
    width: 13px;
    display: flex;
    flex-direction: column;
    align-items: center;
    justify-content: space-between;
    border: 1px solid #cbc5bf;
    border-radius: 6px;
    background: #f7f6f5;
}
.vtrack {
    flex: 1;
    width: 100%;
    margin: 8px 0 9px;
    border-radius: 6px;
    background: #dcd8d3;
}
.vthumb {
    height: 205px;
    display: flex;
    flex-direction: column;
    align-items: center;
    justify-content: center;
    gap: 2px;
    border: 1px solid #b5afa8;
    border-radius: 6px;
    background: linear-gradient(90deg, #fff, #f0eeec);
}
.vthumb i {
    width: 4px;
    height: 1px;
    background: #aaa;
}
.tri {
    position: relative;
    border: 3px solid transparent;
}
.up {
    top: 4px;
    border-bottom: 4px solid #777;
    border-top: 0;
}
.down {
    bottom: 4px;
    border-top: 4px solid #777;
    border-bottom: 0;
}
.left {
    border-right: 4px solid #555;
    border-left: 0;
}
.right {
    border-left: 4px solid #555;
    border-right: 0;
}

/* sheet tabs */
.tab-row {
    height: 13px;
    display: flex;
    align-items: center;
    border-left: 1px solid #000;
}
.nav {
    width: 11px;
    height: 11px;
    margin-left: 1px;
    margin-right: 1px;
    display: flex;
    border: 1px solid #a7a19b;
    border-radius: 3px;
    background: #efedeb;
}
.nav svg {
    width: 9px;
    height: 9px;
}
.off {
    opacity: 0.45;
}
.tabs {
    width: 756px;
    height: 13px;
    display: flex;
    overflow: hidden;
}
.tab {
    height: 13px;
    flex: none;
    margin-right: -6px;
    padding: 0 1px 1px;
    background: #000;
    clip-path: polygon(0 0, 100% 0, calc(100% - 6px) 100%, 6px 100%);
}
.tab span {
    height: 12px;
    display: block;
    clip-path: polygon(0 0, 100% 0, calc(100% - 6px) 100%, 6px 100%);
    background: #1df51d;
    color: #111;
    font-size: 11px;
    line-height: 12px;
    letter-spacing: -0.2px;
    text-align: center;
    white-space: nowrap;
}
.tab.cover span {
    background: #00f;
    color: #fff;
}
.tab.current span {
    background: linear-gradient(#fff 10px, #1df51d 10px);
    font-weight: bold;
    font-size: 10.5px;
    letter-spacing: -0.4px;
}
.tab.summary span {
    background: #f00;
    color: #fff;
}
.tab.other span {
    background: #ff0;
    text-align: left;
    padding-left: 7px;
}
.tab-grip {
    width: 6px;
    height: 13px;
    border: 1px solid #000;
    border-left: 0;
    background: #eee;
}
.hscroll {
    width: 392px;
    height: 13px;
    margin-left: 1px;
    display: flex;
    align-items: center;
    border: 1px solid #cbc5bf;
    border-right: 3px solid #000;
    border-radius: 6px 0 0 6px;
    background: #f7f6f5;
}
.hscroll .left {
    margin-left: 4px;
}
.hscroll .right {
    margin-right: 5px;
}
.htrack {
    flex: 1;
    height: 12px;
    margin: 0 5px 0 2px;
    border-radius: 6px;
    background: #dcd8d3;
}
.hthumb {
    width: 161px;
    height: 12px;
    display: flex;
    align-items: center;
    justify-content: center;
    gap: 2px;
    border: 1px solid #b5afa8;
    border-radius: 6px;
    background: linear-gradient(#fff, #f0eeec);
}
.hthumb i {
    width: 1px;
    height: 4px;
    background: #aaa;
}

/* status bar */
.statusbar {
    height: 23px;
    display: flex;
    align-items: center;
    padding-top: 2px;
    border-top: 1px solid #fff;
    font-size: 12px;
    letter-spacing: -0.1px;
}
.st {
    height: 17px;
    line-height: 17px;
    border-right: 1px solid #b0aca8;
}
.sheet-no {
    width: 307px;
    padding-left: 10px;
}
.style {
    width: 306px;
    padding-left: 5px;
}
.gap {
    width: 54px;
}
.mode {
    width: 35px;
    padding-left: 4px;
}
.doc {
    width: 31px;
    padding: 0 0 0 6px;
}
.sign {
    width: 29px;
}
.sum {
    width: 327px;
    text-align: center;
}
.zoom {
    width: 153px;
    padding: 1px 0 0 21px;
}
.pct {
    padding-left: 1px;
    border-right: 0;
}
```

FILE: script.js
```javascript
const sheet = document.getElementById('sheet');
const tabs = document.getElementById('tabs');

// day, kind, tipo, mattino x2, pomeriggio x2, totali x5, settore
const days = [
    ['1 domenica', 'holiday'],
    ['2 lunedì', 'weekday', 'Ferie'],
    ['3 martedì', 'weekday', 'Ferie'],
    ['4 mercoledì', 'weekday', 'Ferie'],
    ['5 giovedì', 'weekday', 'Ferie'],
    ['6 venerdì', 'holiday'],
    ['7 sabato', 'saturday', 'Ferie'],
    ['8 domenica', 'holiday'],
    ['9 lunedì', 'weekday', '', '08.00', '12.00', '13.00', '17.30', '08.30', '08.00', '00.30', '', '', 'Cortile'],
    ['10 martedì', 'weekday', '', '08.00', '12.00', '13.00', '17.00', '08.00', '08.00', '', '', '', 'Vigneto'],
    ['11 mercoledì', 'weekday', '', '08.00', '12.00', '13.00', '17.00', '08.00', '08.00', '', '', '', 'Cantina'],
    ['12 giovedì', 'weekday', '', '08.00', '12.00', '13.00', '17.00', '08.00', '08.00', '', '', '', 'Cantina'],
    ['13 venerdì', 'weekday', '', '08.00', '12.00', '13.00', '17.30', '08.30', '07.00', '01.30', '', '', 'Cantina'],
    ['14 sabato', 'saturday'],
    ['15 domenica', 'holiday'],
    ['16 lunedì', 'weekday', '', '08.00', '12.00', '13.00', '17.00', '08.00', '08.00', '', '', '', 'Cantina'],
    ['17 martedì', 'weekday', '', '08.00', '12.00', '13.00', '17.30', '08.00', '08.00', '00.30', '', '', 'Cantina'],
    ['18 mercoledì', 'weekday', '', '08.00', '12.00', '13.00', '18.00', '09.00', '08.00', '01.00', '', '', 'Cantina']
];

const ACTIVE_ROW = 15;

function addCell(className, text) {
    const cell = document.createElement('div');
    cell.className = className;
    cell.textContent = text || '';
    sheet.appendChild(cell);
    return cell;
}

days.forEach((day, i) => {
    const row = i + 9;
    const active = row === ACTIVE_ROW;
    addCell(active ? 'row-head active' : 'row-head', String(row));
    addCell('day ' + day[1], day[0]);
    for (let col = 2; col <= 13; col++) {
        const isTotal = col >= 7 && col <= 11;
        const cell = addCell(isTotal ? 'cell total' : 'cell work-cell', day[col]);
        if (active && col === 2) {
            cell.classList.add('selected');
            cell.innerHTML += '<div class="picker"><svg width="7" height="9" viewBox="0 0 7 9"><path d="M2.500 0h2v3H7L3.500 6.500 0 3h2.500zM0 7.500h7v1H0z" fill="#333"/></svg></div>' +
                '<svg class="pointer" viewBox="0 0 16 22"><path d="M3 2v15l3.500-3.500 3.500 6.500 2.500-1.500-3-6H14z" fill="#fff" stroke="#222"/></svg>';
        }
    }
});

// name, width, kind
const sheets = [
    ['Copertina', 63, 'cover'], ['Gennaio', 52, 'current'], ['Febbraio', 55], ['Marzo', 44],
    ['Aprile', 40], ['Maggio', 49], ['Giugno', 45], ['Luglio', 42], ['Agosto', 48],
    ['Settembre', 64], ['Ottobre', 53], ['Novembre', 64], ['Dicembre', 59],
    ['Riepilogo', 58, 'summary'], ['Co', 40, 'other']
];

sheets.forEach(([name, width, kind], i) => {
    const tab = document.createElement('div');
    tab.className = 'tab ' + (kind || '');
    tab.style.width = (width + 6) + 'px';
    tab.innerHTML = '<span>' + name + '</span>';
    // tabs are stacked from the current one outwards
    tab.style.position = 'relative';
    tab.style.zIndex = i <= 1 ? 19 + i : 20 - i;
    tabs.appendChild(tab);
});
```
